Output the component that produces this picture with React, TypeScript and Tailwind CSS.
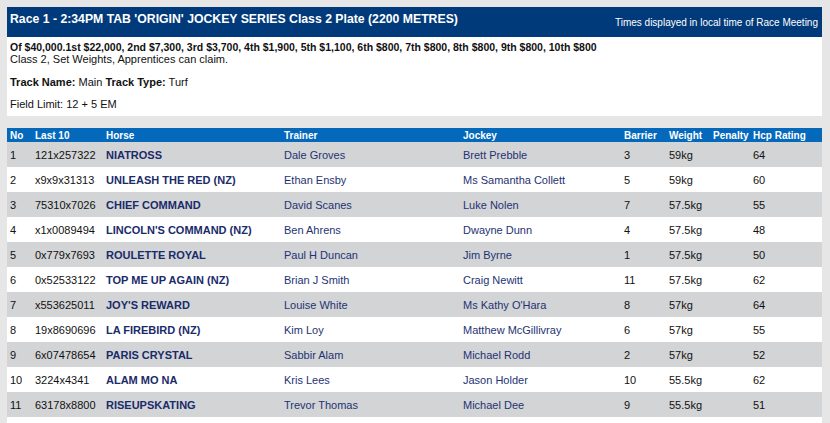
import React from "react"

type Runner = {
  no: number
  last10: string
  horse: string
  trainer: string
  jockey: string
  barrier: number
  weight: string
  penalty: string
  rating: number
}

const runners: Runner[] = [
  { no: 1, last10: "121x257322", horse: "NIATROSS", trainer: "Dale Groves", jockey: "Brett Prebble", barrier: 3, weight: "59kg", penalty: "", rating: 64 },
  { no: 2, last10: "x9x9x31313", horse: "UNLEASH THE RED (NZ)", trainer: "Ethan Ensby", jockey: "Ms Samantha Collett", barrier: 5, weight: "59kg", penalty: "", rating: 60 },
  { no: 3, last10: "75310x7026", horse: "CHIEF COMMAND", trainer: "David Scanes", jockey: "Luke Nolen", barrier: 7, weight: "57.5kg", penalty: "", rating: 55 },
  { no: 4, last10: "x1x0089494", horse: "LINCOLN'S COMMAND (NZ)", trainer: "Ben Ahrens", jockey: "Dwayne Dunn", barrier: 4, weight: "57.5kg", penalty: "", rating: 48 },
  { no: 5, last10: "0x779x7693", horse: "ROULETTE ROYAL", trainer: "Paul H Duncan", jockey: "Jim Byrne", barrier: 1, weight: "57.5kg", penalty: "", rating: 50 },
  { no: 6, last10: "0x52533122", horse: "TOP ME UP AGAIN (NZ)", trainer: "Brian J Smith", jockey: "Craig Newitt", barrier: 11, weight: "57.5kg", penalty: "", rating: 62 },
  { no: 7, last10: "x553625011", horse: "JOY'S REWARD", trainer: "Louise White", jockey: "Ms Kathy O'Hara", barrier: 8, weight: "57kg", penalty: "", rating: 64 },
  { no: 8, last10: "19x8690696", horse: "LA FIREBIRD (NZ)", trainer: "Kim Loy", jockey: "Matthew McGillivray", barrier: 6, weight: "57kg", penalty: "", rating: 55 },
  { no: 9, last10: "6x07478654", horse: "PARIS CRYSTAL", trainer: "Sabbir Alam", jockey: "Michael Rodd", barrier: 2, weight: "57kg", penalty: "", rating: 52 },
  { no: 10, last10: "3224x4341", horse: "ALAM MO NA", trainer: "Kris Lees", jockey: "Jason Holder", barrier: 10, weight: "55.5kg", penalty: "", rating: 62 },
  { no: 11, last10: "63178x8800", horse: "RISEUPSKATING", trainer: "Trevor Thomas", jockey: "Michael Dee", barrier: 9, weight: "55.5kg", penalty: "", rating: 51 },
]

const cols = "grid grid-cols-[25px_71px_178px_179px_161px_45px_44px_40px_1fr] pl-[3px]"

export default function App() {
  return (
    <div className="min-h-[423px] bg-[#e6e6e6] pt-[7px] pl-[7px] pr-[8px] font-['Liberation_Sans',Arial,sans-serif] text-[11px] text-[#111]">
      {/* Race header */}
      <div className="flex h-[30px] items-start justify-between bg-[#013a7a] pl-[3px] pr-[4px] text-white">
        <h1 className="mt-[5px] text-[12.25px] font-bold leading-[14px]">
          Race 1 - 2:34PM TAB 'ORIGIN' JOCKEY SERIES Class 2 Plate (2200 METRES)
        </h1>
        <span className="mt-[10px] text-[10px] leading-[12px]">Times displayed in local time of Race Meeting</span>
      </div>

      {/* Race info */}
      <div className="h-[79px] bg-white pl-[3px] pt-[4px] leading-[12px]">
        <p className="text-[10.5px] font-bold">
          Of $40,000.1st $22,000, 2nd $7,300, 3rd $3,700, 4th $1,900, 5th $1,100, 6th $800, 7th $800, 8th $800, 9th $800, 10th $800
        </p>
        <p>Class 2, Set Weights, Apprentices can claim.</p>
        <p className="mt-[11px]">
          <b>Track Name:</b> Main <b>Track Type:</b> Turf
        </p>
        <p className="mt-[10px]">Field Limit: 12 + 5 EM</p>
      </div>

      {/* Field table */}
      <div className="mt-[12px] bg-white pb-[6px]">
        <div className={`${cols} h-[14px] items-center bg-[#0569bb] text-[10px] font-bold text-white`}>
          <span>No</span>
          <span>Last 10</span>
          <span>Horse</span>
          <span>Trainer</span>
          <span>Jockey</span>
          <span>Barrier</span>
          <span>Weight</span>
          <span>Penalty</span>
          <span>Hcp Rating</span>
        </div>
        {runners.map((r, i) => (
          <div key={r.no} className={`${cols} h-[25px] items-center pt-px ${i % 2 === 0 ? "bg-[#d3d4d6]" : "bg-white"}`}>
            <span>{r.no}</span>
            <span>{r.last10}</span>
            <span className="font-bold text-[#1a2b6a]">{r.horse}</span>
            <span className="text-[#1e3373]">{r.trainer}</span>
            <span className="text-[#1e3373]">{r.jockey}</span>
            <span>{r.barrier}</span>
            <span>{r.weight}</span>
            <span>{r.penalty}</span>
            <span>{r.rating}</span>
          </div>
        ))}
      </div>
    </div>
  )
}
